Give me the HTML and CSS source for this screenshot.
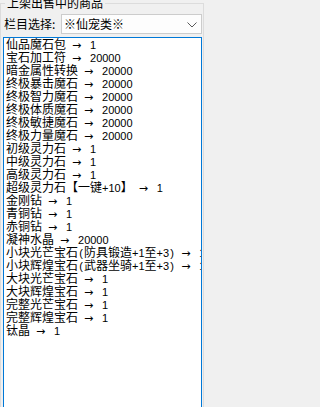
FILE: index.html
```html
<!DOCTYPE html>
<html lang="zh-CN">
<head>
<meta charset="utf-8">
<title>上架出售中的商品</title>
<link rel="stylesheet" href="styles.css">
</head>
<body>
<section class="group">
  <div class="title">上架出售中的商品</div>
  <div class="filter">
    <span class="label">栏目选择:</span>
    <div class="combo">
      <span class="combo-text">※仙宠类※</span>
      <svg class="chev" width="10" height="6" viewBox="0 0 10 6"><path d="M0.5 0.5 L5 5 L9.5 0.5" fill="none" stroke="#5a5a5a" stroke-width="1"/></svg>
    </div>
  </div>
  <div class="list">
    <div class="item"><span class="name">仙品魔石包</span><span class="arr">→</span><span class="num">1</span></div>
    <div class="item"><span class="name">宝石加工符</span><span class="arr">→</span><span class="num">20000</span></div>
    <div class="item"><span class="name">暗金属性转换</span><span class="arr">→</span><span class="num">20000</span></div>
    <div class="item"><span class="name">终极暴击魔石</span><span class="arr">→</span><span class="num">20000</span></div>
    <div class="item"><span class="name">终极智力魔石</span><span class="arr">→</span><span class="num">20000</span></div>
    <div class="item"><span class="name">终极体质魔石</span><span class="arr">→</span><span class="num">20000</span></div>
    <div class="item"><span class="name">终极敏捷魔石</span><span class="arr">→</span><span class="num">20000</span></div>
    <div class="item"><span class="name">终极力量魔石</span><span class="arr">→</span><span class="num">20000</span></div>
    <div class="item"><span class="name">初级灵力石</span><span class="arr">→</span><span class="num">1</span></div>
    <div class="item"><span class="name">中级灵力石</span><span class="arr">→</span><span class="num">1</span></div>
    <div class="item"><span class="name">高级灵力石</span><span class="arr">→</span><span class="num">1</span></div>
    <div class="item"><span class="name">超级灵力石【一键<span class="lat">+10</span>】</span><span class="arr">→</span><span class="num">1</span></div>
    <div class="item"><span class="name">金刚钻</span><span class="arr">→</span><span class="num">1</span></div>
    <div class="item"><span class="name">青铜钻</span><span class="arr">→</span><span class="num">1</span></div>
    <div class="item"><span class="name">赤铜钻</span><span class="arr">→</span><span class="num">1</span></div>
    <div class="item"><span class="name">凝神水晶</span><span class="arr">→</span><span class="num">20000</span></div>
    <div class="item"><span class="name">小块光芒宝石<span class="hw">(</span>防具锻造<span class="lat">+1</span>至<span class="lat">+3</span><span class="hw">)</span></span><span class="arr">→</span><span class="num">1</span></div>
    <div class="item"><span class="name">小块辉煌宝石<span class="hw">(</span>武器坐骑<span class="lat">+1</span>至<span class="lat">+3</span><span class="hw">)</span></span><span class="arr">→</span><span class="num">1</span></div>
    <div class="item"><span class="name">大块光芒宝石</span><span class="arr">→</span><span class="num">1</span></div>
    <div class="item"><span class="name">大块辉煌宝石</span><span class="arr">→</span><span class="num">1</span></div>
    <div class="item"><span class="name">完整光芒宝石</span><span class="arr">→</span><span class="num">1</span></div>
    <div class="item"><span class="name">完整辉煌宝石</span><span class="arr">→</span><span class="num">1</span></div>
    <div class="item"><span class="name">钛晶</span><span class="arr">→</span><span class="num">1</span></div>
  </div>
</section>
</body>
</html>
```

FILE: styles.css
```css
html, body {
  margin: 0;
  padding: 0;
  background: #f0f0f0;
  overflow: hidden;
}

body {
  width: 207px;
  height: 407px;
  font-family: "Noto Sans CJK SC", sans-serif;
  font-size: 12px;
  color: #000;
}

.group {
  box-sizing: border-box;
  width: 204px;
  height: 404px;
  margin-top: 3px;
  padding: 0 1px 0 2px;
  border: 1px solid #dcdcdc;
  border-bottom: none;
}

.title {
  width: fit-content;
  margin: -7px 0 0 2px;
  padding: 0 2px;
  background: #f0f0f0;
  font-size: 12px;
  line-height: 12px;
}

.filter {
  display: flex;
  align-items: center;
  height: 20px;
  margin-top: 5px;
}

.label {
  box-sizing: border-box;
  width: 58px;
  padding-left: 1px;
  line-height: 20px;
}

.combo {
  box-sizing: border-box;
  width: 141px;
  height: 20px;
  display: flex;
  align-items: center;
  padding-left: 2px;
  border: 1px solid #cccccc;
  background: #fdfdfd;
}

.combo-text {
  line-height: 18px;
}

.chev {
  margin-left: auto;
  margin-right: 4px;
  margin-top: 1px;
}

.list {
  box-sizing: border-box;
  width: 199px;
  height: 370px;
  margin-top: 3px;
  padding: 0 0 0 2px;
  border: 1px solid #0078d7;
  border-bottom: none;
  background: #fff;
  overflow: hidden;
}

.item {
  line-height: 13px;
  height: 13px;
  white-space: nowrap;
}

.item:first-child {
  margin-top: -1px;
}

.lat {
  font-family: "Liberation Sans", sans-serif;
  font-size: 11px;
}

.hw {
  display: inline-block;
  width: 6px;
  text-align: center;
  font-family: "Liberation Sans", sans-serif;
  font-size: 11px;
}

.arr {
  display: inline-block;
  width: 12px;
  margin: 0 6px;
  font-family: "DejaVu Sans", sans-serif;
  font-size: 11px;
}

.num {
  font-family: "Liberation Sans", sans-serif;
  font-size: 11px;
}
```
